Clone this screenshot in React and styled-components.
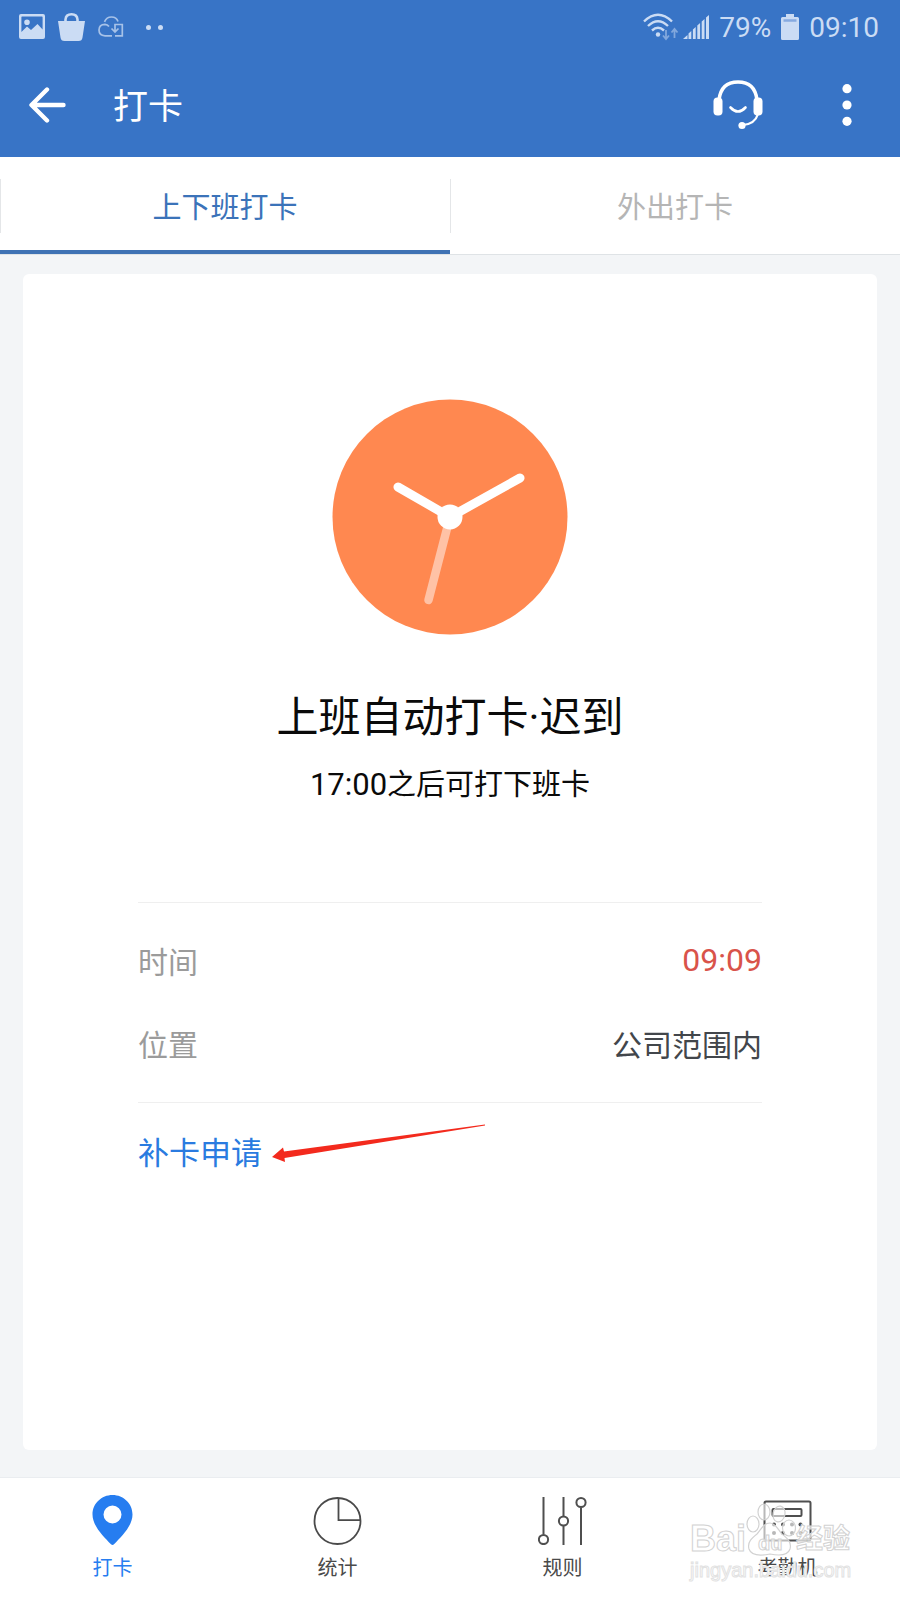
import React, { useState } from "react";
import styled, { createGlobalStyle } from "styled-components";

const GlobalStyle = createGlobalStyle`
  :root {
    --mainBlue: #3874c6;
    --mainWhite: #ffffff;
    --linkBlue: #2a7be0;
    --statusTint: #cbdcf4;
    --pageGrey: #f3f5f7;
  }
  * {
    box-sizing: border-box;
  }
  body {
    margin: 0;
    background: var(--pageGrey);
    font-family: Roboto, "Noto Sans CJK SC", sans-serif;
  }
  button {
    font-family: inherit;
    border: 0;
    padding: 0;
    background: none;
    cursor: pointer;
  }
`;

const PictureIcon = () => (
    <svg width="26" height="26" viewBox="0 0 26 26">
        <path
            fillRule="evenodd"
            fill="currentColor"
            d="M2 0H24Q26 0 26 2V23Q26 25 24 25H2Q0 25 0 23V2Q0 0 2 0ZM3 2.5Q2.4 2.5 2.4 3V18L8 12.5L12 16L18.5 10L23.6 15.5V3Q23.6 2.5 23 2.5ZM8 5.5A2.8 2.8 0 1 1 8 11.1A2.8 2.8 0 1 1 8 5.5Z"
        />
    </svg>
);

const BagIcon = () => (
    <svg width="27" height="28" viewBox="0 0 27 28">
        <path d="M0 8H27L24.5 24.5Q24 28 20.5 28H6.5Q3 28 2.5 24.5Z" fill="currentColor" />
        <path d="M7.5 9V6.5Q8 1.300 13.5 1.300T19.5 6.5V9" fill="none" stroke="currentColor" strokeWidth="2.6" />
    </svg>
);

const CloudIcon = () => (
    <svg width="26" height="22" viewBox="0 0 26 22" fill="none" stroke="currentColor" strokeWidth="1.7" opacity="0.75">
        <path d="M14 19.800H7Q1 19.500 1 14Q1 8.500 7 8.300Q9.500 8.300 11 10.500" />
        <path d="M6.500 5.800Q8.500 1 13.500 1Q18.500 1 20 5.500" />
        <path d="M17 19.800H24.300V8.500H17V15.500M13.500 12.500L17 16L20.500 12.500" />
    </svg>
);

const WifiIcon = () => (
    <svg width="36" height="28" viewBox="0 0 36 28" fill="none" stroke="currentColor">
        <path d="M1 8.500Q15 -5 29 8.500" strokeWidth="2.400" />
        <path d="M5 13Q15 3.500 25 13" strokeWidth="2.400" />
        <path d="M9 17.500Q15 12 21 17.500" strokeWidth="2.400" />
        <circle cx="15" cy="21.500" r="2.200" fill="currentColor" stroke="none" />
        <g strokeWidth="1.800" opacity="0.5">
            <path d="M23 17V25.500M20 22.500L23 26L26 22.500" />
            <path d="M31.500 25V17M28.500 19.500L31.500 16L34.500 19.500" />
        </g>
    </svg>
);

const SignalIcon = () => (
    <svg width="26" height="24" viewBox="0 0 26 24" fill="currentColor">
        <path d="M0 24L4.500 20V24ZM5.500 24V18.500L8.300 16V24ZM9.900 24V14.500L12.700 12V24ZM14.300 24V10.500L17.100 8V24ZM18.700 24V6.500L21.500 4V24ZM23 24V2.500L26 0V24Z" />
    </svg>
);

const BatteryIcon = () => (
    <svg width="18" height="26" viewBox="0 0 18 26">
        <path d="M5 0H13V3H16.500Q18 3 18 4.500V24.500Q18 26 16.500 26H1.500Q0 26 0 24.500V4.500Q0 3 1.500 3H5Z" fill="currentColor" />
        <path d="M2.500 6.500H15.500" stroke="#86aae0" strokeWidth="2.500" />
    </svg>
);

const BackIcon = () => (
    <svg width="37" height="36" viewBox="0 0 37 36" fill="none" stroke="currentColor" strokeWidth="4.400" strokeLinecap="round" strokeLinejoin="round">
        <path d="M18 2.500L2.500 18L18 33.500M3 18H34.500" />
    </svg>
);

const HeadsetIcon = () => (
    <svg width="50" height="50" viewBox="0 0 50 50" fill="none" stroke="currentColor" strokeLinecap="round">
        <path d="M6 20Q8 2 25 2T44 20" strokeWidth="3.500" />
        <rect x="0.500" y="17.500" width="9" height="18" rx="4" fill="currentColor" stroke="none" />
        <rect x="40.500" y="17.500" width="9" height="18" rx="4" fill="currentColor" stroke="none" />
        <path d="M17.500 27.500Q25 35.500 32.500 27.500" strokeWidth="2.600" />
        <path d="M45 34Q42 44 30 45" strokeWidth="2.200" />
        <circle cx="29" cy="45.500" r="3.600" fill="currentColor" stroke="none" />
    </svg>
);

const MoreIcon = () => (
    <svg width="10" height="42" viewBox="0 0 10 42" fill="currentColor">
        <circle cx="5" cy="4.700" r="4.600" />
        <circle cx="5" cy="21" r="4.600" />
        <circle cx="5" cy="37.300" r="4.600" />
    </svg>
);

const ClockFace = () => (
    <svg width="236" height="236" viewBox="0 0 236 236" strokeLinecap="round">
        <circle cx="118" cy="118" r="117.500" fill="#ff8850" />
        <path d="M118 118L96.500 201" stroke="#ffc2a6" strokeWidth="8.500" />
        <path d="M66 88L118 118L188 79" fill="none" stroke="#ffffff" strokeWidth="9" />
        <circle cx="118" cy="118" r="12.500" fill="#ffffff" />
    </svg>
);

const PointerArrow = () => (
    <svg width="214" height="36" viewBox="0 0 214 36">
        <path d="M0 33L11 23.500L12 27.500L213 0.500V1.500L12.500 34L13 38Z" fill="#f32a1d" />
    </svg>
);

const PinIcon = () => (
    <svg width="50" height="50" viewBox="0 0 50 50">
        <path
            fillRule="evenodd"
            fill="#267df0"
            d="M24.5 0C35.5 0 44.5 8.500 44.5 19.500C44.5 31 33.5 41.500 26 49.300Q24.5 50.600 23 49.300C15.5 41.500 4.5 31 4.5 19.500C4.5 8.500 13.5 0 24.5 0ZM24.5 10.500A9 9 0 1 0 24.5 28.500A9 9 0 1 0 24.5 10.500Z"
        />
    </svg>
);

const PieIcon = () => (
    <svg width="50" height="50" viewBox="0 0 50 50" fill="none" stroke="#4a4a4a" strokeWidth="1.800">
        <circle cx="24.500" cy="26" r="23" />
        <path d="M25.500 3V25.200H47.500" />
    </svg>
);

const SlidersIcon = () => (
    <svg width="50" height="50" viewBox="0 0 50 50" fill="none" stroke="#4f4f4f" strokeWidth="2">
        <path d="M5.500 2V39.500M25.500 2V21M25.500 31V50M43 12.500V50" />
        <circle cx="5.500" cy="44.500" r="4.600" />
        <circle cx="25.500" cy="26" r="4.600" />
        <circle cx="43" cy="7.500" r="4.600" />
    </svg>
);

const MachineIcon = () => (
    <svg width="50" height="50" viewBox="0 0 50 50" fill="none" stroke="#4f4f4f" strokeWidth="2">
        <rect x="1.500" y="6.500" width="46" height="39" rx="1.500" />
        <rect x="9.500" y="14" width="29" height="7" rx="1" />
        <g fill="#4f4f4f" stroke="none">
            {[11, 20, 29, 37.5].map(x => (
                <React.Fragment key={x}>
                    <circle cx={x} cy="29.500" r="2" />
                    <circle cx={x} cy="38" r="2" />
                </React.Fragment>
            ))}
        </g>
    </svg>
);

const PawIcon = () => (
    <svg width="50" height="58" viewBox="0 0 50 58" fill="#ffffff" fillOpacity="0.6" stroke="#d2d2d2" strokeWidth="1.200">
        <path d="M24 24C30 24 32 31 36 35C41 39 46 43 44 50C42 56 34 57 24 55C14 57 5 56 3 50C1 43 6 39 11 35C15 31 17 24 24 24Z" />
        <ellipse cx="7" cy="25" rx="6" ry="8" />
        <ellipse cx="18" cy="13" rx="6" ry="8" />
        <ellipse cx="33" cy="15" rx="6" ry="8" transform="rotate(12 33 15)" />
        <ellipse cx="43" cy="29" rx="6.500" ry="8" />
    </svg>
);

const tabs = ["上下班打卡", "外出打卡"];

const navItems = [
    { label: "打卡", Icon: PinIcon },
    { label: "统计", Icon: PieIcon },
    { label: "规则", Icon: SlidersIcon },
    { label: "考勤机", Icon: MachineIcon }
];

export default function App() {
    const [tab, setTab] = useState(0);
    const [page, setPage] = useState(0);

    return (
        <Screen>
            <GlobalStyle />
            <Header>
                <StatusBar>
                    <StatusGroup $gap={13}>
                        <PictureIcon />
                        <BagIcon />
                        <CloudIcon />
                        <Dots>
                            <i />
                            <i />
                        </Dots>
                    </StatusGroup>
                    <StatusGroup $gap={10}>
                        <Signals>
                            <WifiIcon />
                            <SignalIcon />
                        </Signals>
                        <span>79%</span>
                        <BatteryIcon />
                        <span>09:10</span>
                    </StatusGroup>
                </StatusBar>
                <AppBar>
                    <IconButton aria-label="返回">
                        <BackIcon />
                    </IconButton>
                    <Title>打卡</Title>
                    <IconButton aria-label="客服">
                        <HeadsetIcon />
                    </IconButton>
                    <IconButton aria-label="更多">
                        <MoreIcon />
                    </IconButton>
                </AppBar>
            </Header>
            <Tabs>
                {tabs.map((name, i) => (
                    <Tab key={name} $active={tab === i} onClick={() => setTab(i)}>
                        {name}
                    </Tab>
                ))}
            </Tabs>
            <Main>
                <Card>
                    <ClockFace />
                    <Heading>上班自动打卡·迟到</Heading>
                    <Hint>
                        <Digits>17:00</Digits>之后可打下班卡
                    </Hint>
                    <Details>
                        <Row>
                            <dt>时间</dt>
                            <Late>09:09</Late>
                        </Row>
                        <Row>
                            <dt>位置</dt>
                            <dd>公司范围内</dd>
                        </Row>
                    </Details>
                    <Apply>
                        <ApplyLink href="#apply">补卡申请</ApplyLink>
                        <PointerArrow />
                    </Apply>
                </Card>
            </Main>
            <BottomNav>
                {navItems.map(({ label, Icon }, i) => (
                    <NavButton key={label} $active={page === i} onClick={() => setPage(i)}>
                        <Icon />
                        {label}
                    </NavButton>
                ))}
                <Watermark>
                    <Brand>
                        <BrandText>Bai</BrandText>
                        <Paw>
                            <PawIcon />
                            <PawText>du</PawText>
                        </Paw>
                        <BrandName>经验</BrandName>
                    </Brand>
                    <Site>jingyan.baidu.com</Site>
                </Watermark>
            </BottomNav>
        </Screen>
    );
}

const Screen = styled.div`
  min-height: 100vh;
  display: flex;
  flex-direction: column;
`;

const Header = styled.header`
  background: var(--mainBlue);
  color: var(--mainWhite);
`;

const StatusBar = styled.div`
  height: 54px;
  padding: 0 21px 0 19px;
  display: flex;
  align-items: center;
  justify-content: space-between;
  color: var(--statusTint);
  font-size: 28px;
`;

const StatusGroup = styled.div`
  display: flex;
  align-items: center;
  gap: ${props => props.$gap}px;
`;

const Signals = styled.div`
  display: flex;
  align-items: center;
  gap: 4px;
`;

const Dots = styled.div`
  display: flex;
  gap: 7px;
  padding-left: 9px;
  i {
    width: 5px;
    height: 5px;
    border-radius: 50%;
    background: currentColor;
  }
`;

const AppBar = styled.div`
  height: 103px;
  padding: 0 48px 2px 29px;
  display: flex;
  align-items: center;
`;

const IconButton = styled.button`
  display: flex;
  color: inherit;
  & + & {
    margin-left: 79px;
  }
`;

const Title = styled.h1`
  flex: 1;
  margin: 0 0 0 47px;
  padding-top: 6px;
  font-size: 35px;
  line-height: 48px;
  font-weight: 400;
`;

const Tabs = styled.nav`
  display: flex;
  background: var(--mainWhite);
  border-bottom: 1px solid #dfe3e6;
`;

const Tab = styled.button`
  flex: 1;
  height: 97px;
  padding-top: 3px;
  font-size: 29px;
  color: ${props => (props.$active ? "#3b73b9" : "#b5b5b5")};
  border-bottom: 4px solid ${props => (props.$active ? "#3f72b4" : "transparent")};
  background: linear-gradient(#e4e6e8, #e4e6e8) 0 22px / 1px 54px no-repeat;
`;

const Main = styled.main`
  flex: 1;
  display: flex;
  padding: 19px 23px 27px;
`;

const Card = styled.section`
  flex: 1;
  padding: 125px 115px 40px;
  display: flex;
  flex-direction: column;
  align-items: center;
  background: var(--mainWhite);
  border-radius: 6px;
`;

const Heading = styled.h2`
  margin: 55px 0 19px;
  font-size: 42px;
  line-height: 56px;
  font-weight: 400;
  color: #0a0a0a;
`;

const Hint = styled.p`
  margin: 0;
  font-size: 29px;
  line-height: 40px;
  color: #0a0a0a;
`;

const Digits = styled.span`
  font-size: 31px;
`;

const Details = styled.dl`
  width: 100%;
  margin: 97px 0 31px;
  padding: 15px 0 18px;
  border: solid #efefef;
  border-width: 1px 0;
`;

const Row = styled.div`
  height: 83px;
  display: flex;
  align-items: center;
  justify-content: space-between;
  font-size: 30px;
  dt {
    color: #9b9b9b;
  }
  dd {
    margin: 0;
    color: #42464b;
  }
`;

const Late = styled.dd`
  && {
    font-size: 32px;
    color: #d9534a;
  }
`;

const Apply = styled.div`
  width: 100%;
  display: flex;
  gap: 10px;
  svg {
    overflow: visible;
    margin-top: -10px;
  }
`;

const ApplyLink = styled.a`
  font-size: 31px;
  line-height: 40px;
  color: var(--linkBlue);
  text-decoration: none;
`;

const BottomNav = styled.nav`
  position: relative;
  display: flex;
  padding: 17px 0 20px;
  background: var(--mainWhite);
  border-top: 1px solid #eaedf0;
`;

const NavButton = styled.button`
  flex: 1;
  display: flex;
  flex-direction: column;
  align-items: center;
  gap: 11px;
  font-size: 20px;
  line-height: 24px;
  color: ${props => (props.$active ? "#267df0" : "#4a4a4a")};
`;

const Watermark = styled.div`
  position: absolute;
  right: 48px;
  bottom: 17px;
  width: 162px;
  pointer-events: none;
  color: rgba(255, 255, 255, 0.7);
  font-family: "Liberation Sans", "Noto Sans CJK SC", sans-serif;
  -webkit-text-stroke: 1px #d2d2d2;
`;

const Brand = styled.div`
  display: flex;
  align-items: flex-end;
  font-weight: 700;
`;

const BrandText = styled.span`
  font-size: 36px;
  line-height: 36px;
`;

const BrandName = styled.span`
  font-size: 27px;
  line-height: 36px;
`;

const Paw = styled.span`
  position: relative;
  display: flex;
`;

const PawText = styled.span`
  position: absolute;
  left: 12px;
  bottom: 2px;
  font-size: 20px;
  line-height: 24px;
`;

const Site = styled.div`
  font-size: 20px;
  line-height: 26px;
  color: var(--mainWhite);
  -webkit-text-stroke: 1px #e2e2e2;
`;
